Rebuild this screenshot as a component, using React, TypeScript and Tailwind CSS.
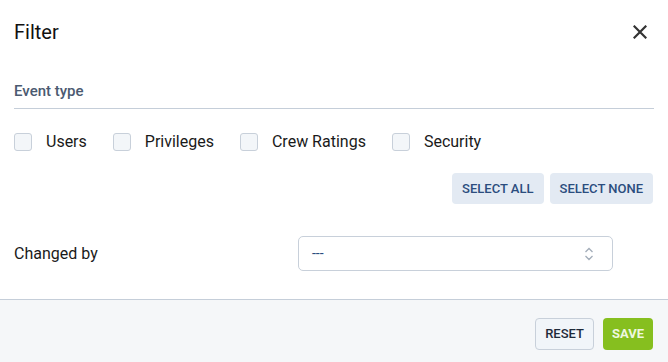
import { useState } from "react";

const eventTypes = ["Users", "Privileges", "Crew Ratings", "Security"];

export default function App() {
  const [checked, setChecked] = useState<Record<string, boolean>>({});

  const toggle = (name: string) => setChecked((c) => ({ ...c, [name]: !c[name] }));

  return (
    <div
      className="w-[668px] h-[362px] bg-white flex flex-col text-[#1a1a1a]"
      style={{ fontFamily: "Roboto, 'Liberation Sans', sans-serif" }}
    >
      <div className="flex-1 px-[14px]">
        <div className="flex items-center justify-between h-[64px] pb-[1px]">
          <h1 className="text-[20px] leading-none text-[#111]">Filter</h1>
          <button type="button" className="w-[18px] h-[18px] mr-[5px] flex items-center justify-center text-[#333]">
            <svg width="14" height="14" viewBox="0 0 14 14">
              <path d="M1.5 1.5 L12.5 12.5 M12.5 1.5 L1.5 12.5" stroke="currentColor" strokeWidth="2.2" strokeLinecap="square" />
            </svg>
          </button>
        </div>

        <div className="mt-[18px] border-b border-[#c5ced9] pb-[8px]">
          <h2 className="text-[15px] leading-[18px] font-medium text-[#4b5a71]">Event type</h2>
        </div>

        <div className="flex items-center mt-[24px] h-[18px]">
          {eventTypes.map((t) => (
            <label key={t} className="flex items-center mr-[26px] cursor-pointer">
              <span
                onClick={() => toggle(t)}
                className={`w-[18px] h-[18px] rounded-[3px] border border-[#c8d0da] ${
                  checked[t] ? "bg-[#2b4d7e]" : "bg-[#f3f6f9]"
                }`}
              />
              <span className="ml-[14px] text-[16px] leading-none text-[#1a1a1a]">{t}</span>
            </label>
          ))}
        </div>

        <div className="flex justify-end gap-[6px] mt-[22px] mr-[1px]">
          <button
            type="button"
            className="h-[31px] px-[10px] rounded-[4px] bg-[#e3eaf3] text-[#2b4d7e] text-[13px] font-medium uppercase"
          >
            Select all
          </button>
          <button
            type="button"
            className="h-[31px] px-[10px] rounded-[4px] bg-[#e3eaf3] text-[#2b4d7e] text-[13px] font-medium uppercase"
          >
            Select none
          </button>
        </div>

        <div className="flex items-center mt-[32px]">
          <span className="w-[284px] text-[16px] text-[#1a1a1a]">Changed by</span>
          <div className="w-[315px] h-[35px] border border-[#c8d0da] rounded-[5px] flex items-center justify-between pl-[13px] pr-[18px]">
            <span className="text-[14px] text-[#2b4d7e]">---</span>
            <svg width="10" height="16" viewBox="0 0 10 16" className="text-[#a3adb9]">
              <path d="M1.5 6 L5 2.5 L8.5 6 M1.5 10 L5 13.5 L8.5 10" fill="none" stroke="currentColor" strokeWidth="1.3" />
            </svg>
          </div>
        </div>
      </div>

      <div className="h-[63px] border-t border-[#c5ced9] bg-[#f5f7f9] flex items-center justify-end gap-[9px] pl-[14px] pr-[15px] pt-[5px]">
        <button
          type="button"
          className="h-[32px] px-[9px] rounded-[4px] border border-[#c8d0da] bg-[#f1f5f9] text-[#1e2a3a] text-[13px] font-medium uppercase"
        >
          Reset
        </button>
        <button
          type="button"
          className="h-[32px] px-[9px] rounded-[4px] bg-[#86bf1f] text-[#eef7df] text-[13px] font-bold uppercase"
        >
          Save
        </button>
      </div>
    </div>
  );
}
